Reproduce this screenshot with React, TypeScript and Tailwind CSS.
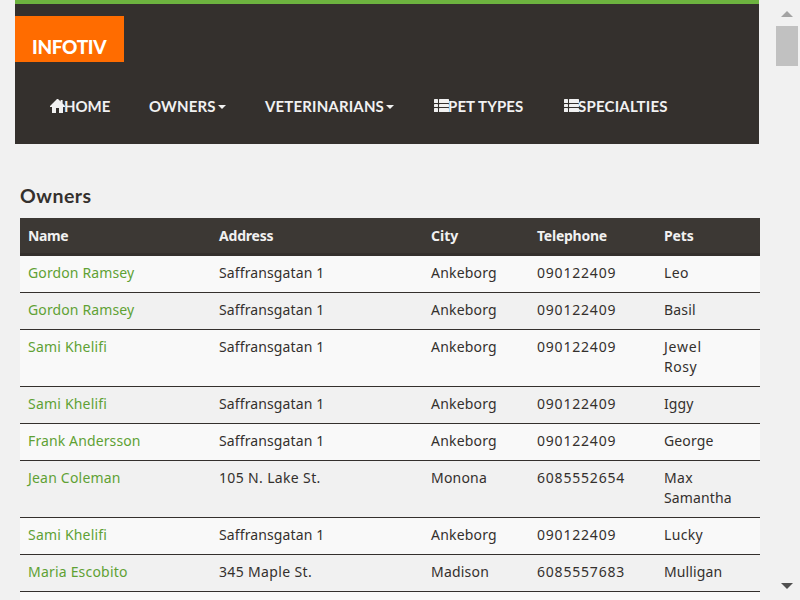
import React from "react";

type Cell = { text: string; track: string };

const t0 = "tracking-normal";
const t1 = "tracking-[0.12px]";
const t2 = "tracking-[0.2px]";
const t3 = "tracking-[0.35px]";
const t5 = "tracking-[0.5px]";
const t8 = "tracking-[0.8px]";

const c = (text: string, track: string): Cell => ({ text, track });

const gordon = c("Gordon Ramsey", t1);
const sami = c("Sami Khelifi", t2);
const saff = c("Saffransgatan 1", t1);
const anke = c("Ankeborg", t2);
const phone = c("090122409", t8);

type Owner = { name: Cell; address: Cell; city: Cell; phone: Cell; pets: Cell[] };

const owners: Owner[] = [
  { name: gordon, address: saff, city: anke, phone, pets: [c("Leo", t3)] },
  { name: gordon, address: saff, city: anke, phone, pets: [c("Basil", t2)] },
  { name: sami, address: saff, city: anke, phone, pets: [c("Jewel", t8), c("Rosy", t5)] },
  { name: sami, address: saff, city: anke, phone, pets: [c("Iggy", t1)] },
  { name: c("Frank Andersson", t1), address: saff, city: anke, phone, pets: [c("George", t1)] },
  {
    name: c("Jean Coleman", t2),
    address: c("105 N. Lake St.", t3),
    city: c("Monona", t2),
    phone: c("6085552654", t8),
    pets: [c("Max", t3), c("Samantha", t1)],
  },
  { name: sami, address: saff, city: anke, phone, pets: [c("Lucky", t3)] },
  {
    name: c("Maria Escobito", t2),
    address: c("345 Maple St.", t3),
    city: c("Madison", t2),
    phone: c("6085557683", t8),
    pets: [c("Mulligan", t1)],
  },
];

const cols = "grid grid-cols-[191px_212px_106px_127px_104px]";

function Text({ cell }: { cell: Cell }) {
  return <div className={`px-2 whitespace-nowrap ${cell.track}`}>{cell.text}</div>;
}

function Home() {
  return (
    <svg className="h-[14px] w-[15px] shrink-0" viewBox="0 0 15 14" fill="currentColor">
      <path d="M7 0h1L10.6 2.6V1H12.6V4.6L15 7V8H13V14H9V9H6V14H2V8H0V7Z" />
    </svg>
  );
}

function List() {
  return (
    <svg className="mb-px h-[13px] w-[15px] shrink-0" viewBox="0 0 15 13" fill="currentColor">
      <rect x="0" y="0" width="4" height="4" rx="0.6" />
      <rect x="5" y="0" width="10" height="4" rx="0.6" />
      <rect x="0" y="5" width="4" height="3" rx="0.4" />
      <rect x="5" y="5" width="10" height="3" rx="0.4" />
      <rect x="0" y="9" width="4" height="4" rx="0.6" />
      <rect x="5" y="9" width="10" height="4" rx="0.6" />
    </svg>
  );
}

function Caret() {
  return (
    <svg className="ml-[2px] mt-[2px] h-1 w-2 shrink-0" viewBox="0 0 8 4" fill="currentColor">
      <path d="M0 0h8L4 4z" />
    </svg>
  );
}

export default function App() {
  return (
    <div className="flex h-[600px] w-[800px] overflow-hidden bg-[#f1f1f1] font-['Noto_Sans',sans-serif] text-sm leading-5 text-[#34302d]">
      <main className="w-[775px] shrink-0">
        <header className="ml-[15px] h-36 w-[744px] border-t-4 border-[#6db33f] bg-[#34302d] pt-3">
          <div className="h-[46px] w-[109px] bg-[#ff6c00] pl-[17px] pt-[19px] font-[Lato,sans-serif] text-[19px] leading-[24px] font-black tracking-[-0.35px] text-white">
            INFOTIV
          </div>
          <nav className="mt-[34px] flex h-5 text-[15px] text-[#f1f1f1] font-[Lato,sans-serif] font-bold whitespace-nowrap">
            <a className="ml-[35px] flex w-[99px] items-center">
              <Home />
              <span className="-ml-px tracking-[-0.05px]">HOME</span>
            </a>
            <a className="flex w-[117px] items-center">
              <span className="w-[67px] tracking-[0.15px]">OWNERS</span>
              <Caret />
            </a>
            <a className="flex w-[168px] items-center">
              <span className="-ml-px w-[119px] tracking-[0.15px]">VETERINARIANS</span>
              <Caret />
            </a>
            <a className="flex w-[130px] items-center">
              <List />
              <span className="-ml-px tracking-[0.1px]">PET TYPES</span>
            </a>
            <a className="flex items-center">
              <List />
              <span className="-ml-px tracking-[0.2px]">SPECIALTIES</span>
            </a>
          </nav>
        </header>

        <section className="ml-5 w-[740px] pt-[42px]">
          <h2 className="mb-[12px] h-5 font-[Lato,sans-serif] text-[19.5px] leading-5 font-bold tracking-[0.5px]">Owners</h2>
          <div className={`${cols} h-[38px] border-b-[3px] border-[#34302d] bg-[#3c3834] pt-2 font-bold text-[#f1f1f1]`}>
            <Text cell={c("Name", "tracking-[-0.4px]")} />
            <Text cell={c("Address", "tracking-[-0.2px]")} />
            <Text cell={c("City", t0)} />
            <Text cell={c("Telephone", "tracking-[-0.25px]")} />
            <Text cell={c("Pets", "tracking-[-0.1px]")} />
          </div>
          {owners.map((o, i) => (
            <div key={i} className={`${cols} border-b border-[#34302d] pt-[7px] pb-[9px] odd:bg-[#f9f9f9] even:bg-[#f1f1f1]`}>
              <div className="text-[#5fa134]">
                <Text cell={o.name} />
              </div>
              <Text cell={o.address} />
              <Text cell={o.city} />
              <Text cell={o.phone} />
              <div>
                {o.pets.map((p) => (
                  <Text key={p.text} cell={p} />
                ))}
              </div>
            </div>
          ))}
          <div className="h-[9px] bg-[#f9f9f9]" />
        </section>
      </main>

      <aside className="flex w-[24px] flex-col items-center">
        <svg className="mt-[11px] h-[6px] w-3" viewBox="0 0 12 6" fill="#a3a3a3">
          <path d="M0 6L6 0l6 6z" />
        </svg>
        <div className="mt-[9px] h-10 w-[22px] bg-[#c1c1c1]" />
        <svg className="mt-auto mb-[11px] h-[6px] w-3" viewBox="0 0 12 6" fill="#505050">
          <path d="M0 0h12L6 6z" />
        </svg>
      </aside>
    </div>
  );
}
